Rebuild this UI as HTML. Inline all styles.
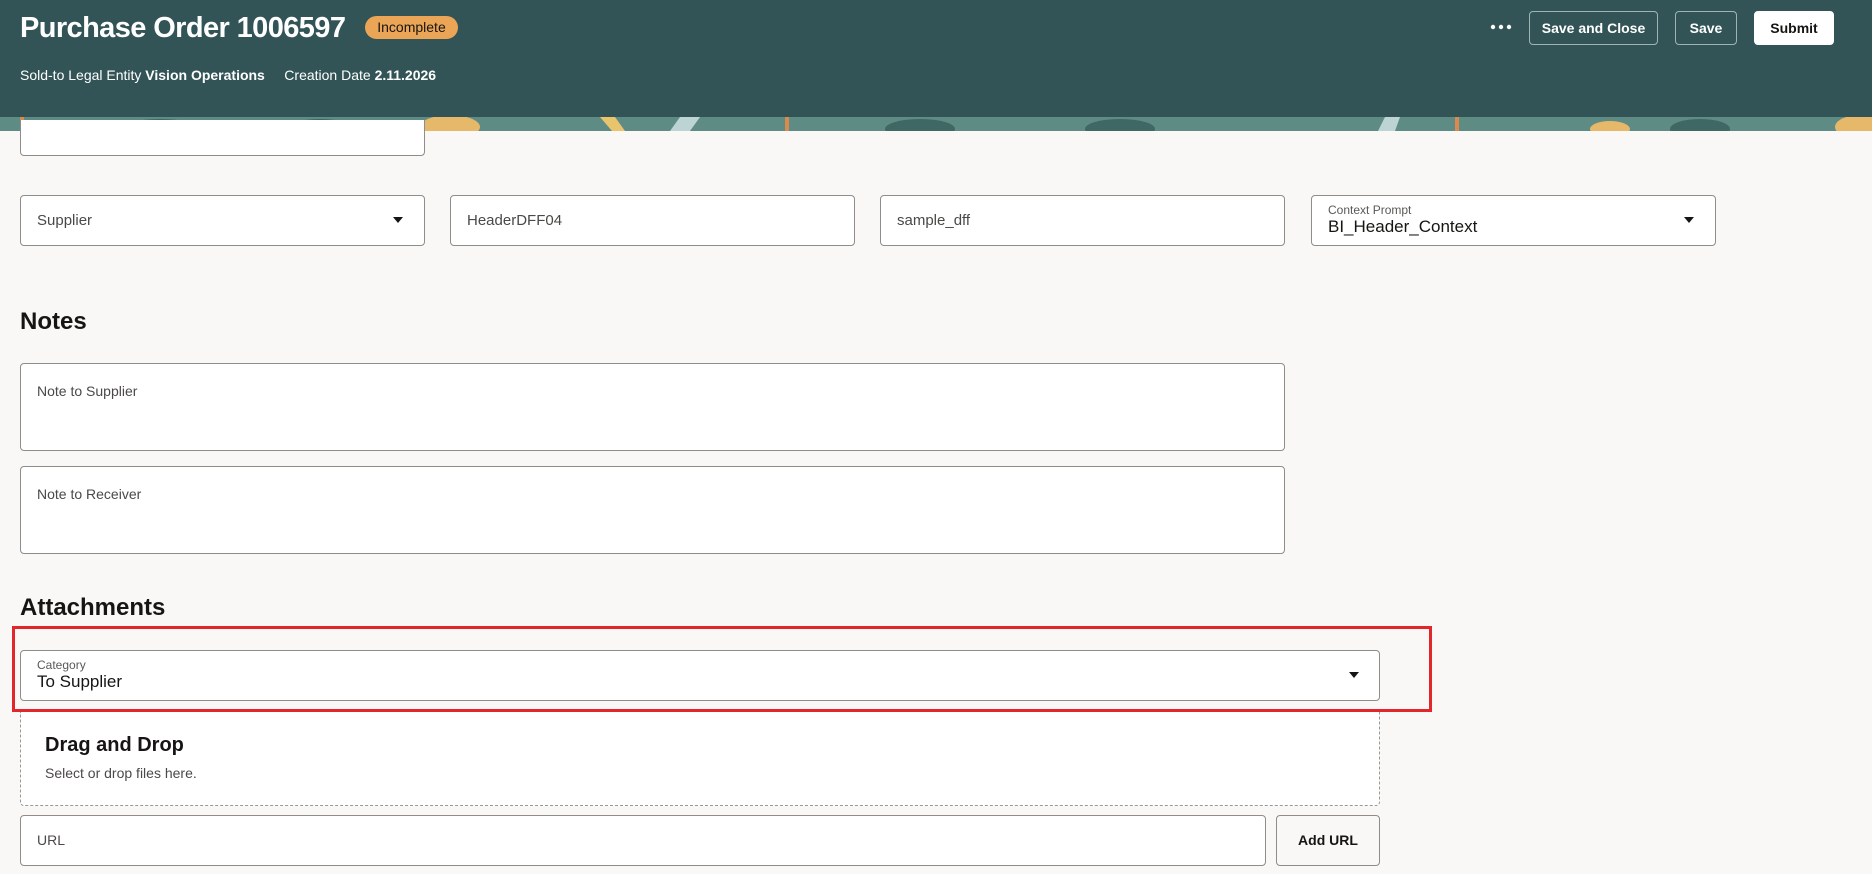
<!DOCTYPE html>
<html><head><meta charset="utf-8"><style>
*{box-sizing:border-box;margin:0;padding:0}
body{width:1872px;height:874px;overflow:hidden;background:#f9f8f6;font-family:"Liberation Sans",sans-serif;color:#161513;position:relative}
.hdr{position:absolute;left:0;top:0;width:1872px;height:117px;background:#325457}
.strip{position:absolute;left:0;top:117px;width:1872px;height:14px;background:#5d8a85;overflow:hidden}
.abs{position:absolute}
.title{left:20px;top:12px;font-size:29px;font-weight:bold;color:#fff;letter-spacing:-0.6px}
.badge{left:365px;top:16px;width:93px;height:23px;border-radius:12px;background:#eba556;color:#161513;font-size:14px;line-height:23px;text-align:center}
.sub{left:20px;top:67px;font-size:14px;color:#fff}
.sub b{font-weight:bold}
.btn{position:absolute;top:11px;height:34px;border:1px solid #9fb4b5;border-radius:4px;color:#fff;font-size:14px;font-weight:bold;line-height:32px;text-align:center}
.field{position:absolute;background:#fff;border:1px solid #8f8c89;border-radius:4px}
.ph{position:absolute;left:16px;font-size:15px;color:#4b4947}
.lab{position:absolute;left:16px;top:7px;font-size:12px;color:#5b5957}
.val{position:absolute;left:16px;top:21px;font-size:17px;color:#161513}
.caret{position:absolute;width:0;height:0;border-left:5px solid transparent;border-right:5px solid transparent;border-top:6px solid #161513}
h2{position:absolute;left:20px;font-size:24px;font-weight:bold}
</style></head><body>
<div class="hdr"></div>
<div class="strip">
<svg width="1872" height="14"><rect width="1872" height="14" fill="#5f8b85"/>
<g fill="#e6b86a"><ellipse cx="450" cy="10" rx="30" ry="12"/><ellipse cx="1860" cy="10" rx="25" ry="12"/><ellipse cx="1610" cy="12" rx="20" ry="8"/></g>
<g fill="#bcd4d4"><polygon points="680,0 700,0 690,14 670,14"/><polygon points="1385,0 1400,0 1395,14 1378,14"/></g>
<g fill="#d98a4c"><rect x="20" y="0" width="4" height="14"/><rect x="785" y="0" width="4" height="14"/><rect x="1455" y="0" width="4" height="14"/></g>
<g fill="#3f6764"><ellipse cx="160" cy="12" rx="40" ry="10"/><ellipse cx="320" cy="12" rx="35" ry="10"/><ellipse cx="920" cy="12" rx="35" ry="10"/><ellipse cx="1120" cy="12" rx="35" ry="10"/><ellipse cx="1700" cy="12" rx="30" ry="10"/></g>
<g fill="#e8c46c"><polygon points="600,0 615,0 625,14 612,14"/></g></svg>
</div>
<div class="abs title">Purchase Order 1006597</div>
<div class="abs badge">Incomplete</div>
<div class="abs sub">Sold-to Legal Entity <b>Vision Operations</b>&nbsp;&nbsp;&nbsp;&nbsp;&nbsp;Creation Date <b>2.11.2026</b></div>
<svg class="abs" style="left:1490px;top:24px" width="24" height="6"><circle cx="3" cy="3" r="2.2" fill="#fff"/><circle cx="11" cy="3" r="2.2" fill="#fff"/><circle cx="19" cy="3" r="2.2" fill="#fff"/></svg>
<div class="btn" style="left:1529px;width:129px">Save and Close</div>
<div class="btn" style="left:1675px;width:62px">Save</div>
<div class="btn" style="left:1754px;width:80px;background:#fff;border-color:#fff;color:#161513">Submit</div>

<div class="field" style="left:20px;top:120px;width:405px;height:36px;border-top:none;border-radius:0 0 4px 4px"></div>

<div class="field" style="left:20px;top:195px;width:405px;height:51px"><div class="ph" style="top:16px">Supplier</div><div class="caret" style="left:372px;top:21px"></div></div>
<div class="field" style="left:450px;top:195px;width:405px;height:51px"><div class="ph" style="top:16px">HeaderDFF04</div></div>
<div class="field" style="left:880px;top:195px;width:405px;height:51px"><div class="ph" style="top:16px">sample_dff</div></div>
<div class="field" style="left:1311px;top:195px;width:405px;height:51px"><div class="lab">Context Prompt</div><div class="val">BI_Header_Context</div><div class="caret" style="left:372px;top:21px"></div></div>

<h2 style="top:308px">Notes</h2>
<div class="field" style="left:20px;top:363px;width:1265px;height:88px"><div class="ph" style="top:19px;font-size:14px">Note to Supplier</div></div>
<div class="field" style="left:20px;top:466px;width:1265px;height:88px"><div class="ph" style="top:19px;font-size:14px">Note to Receiver</div></div>

<h2 style="top:594px">Attachments</h2>
<div class="abs" style="left:12px;top:626px;width:1420px;height:86px;border:3px solid #e3262b"></div>
<div class="field" style="left:20px;top:650px;width:1360px;height:51px"><div class="lab">Category</div><div class="val">To Supplier</div><div class="caret" style="left:1328px;top:21px"></div></div>
<div class="abs" style="left:20px;top:712px;width:1360px;height:94px;border:1px dashed #9a9794;border-top:none;border-radius:0 0 4px 4px;background:#fff"></div>
<div class="abs" style="left:45px;top:734px;font-size:20px;font-weight:bold">Drag and Drop</div>
<div class="abs" style="left:45px;top:765px;font-size:14px;color:#4b4947">Select or drop files here.</div>
<div class="field" style="left:20px;top:815px;width:1246px;height:51px"><div class="ph" style="top:16px;font-size:14px">URL</div></div>
<div class="field" style="left:1276px;top:815px;width:104px;height:51px;background:#f9f8f6;text-align:center;line-height:49px;font-size:14px;font-weight:bold">Add URL</div>
</body></html>
